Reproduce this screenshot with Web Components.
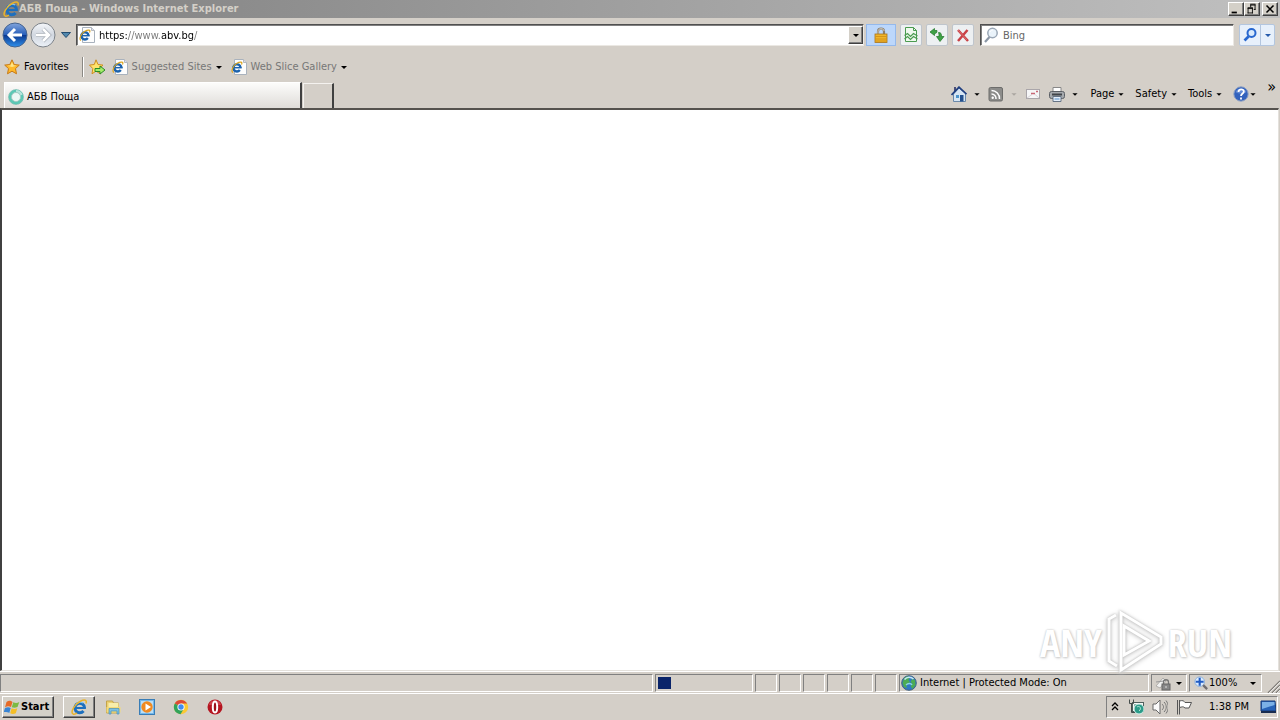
<!DOCTYPE html>
<html lang="en">
<head>
<meta charset="utf-8">
<title>АБВ Поща - Windows Internet Explorer</title>
<style>
html,body{margin:0;height:100%;overflow:hidden}
body{background:#d4cfc8;color:#000;font:11px/14px "DejaVu Sans Condensed","Noto Sans",sans-serif}
</style>
</head>
<body>
<ie-desktop></ie-desktop>
<script>
const icons = {
  ie: `<path d="M13.500 8.800A4.800 4.800 0 1 0 12.500 12" fill="none" stroke="#1d6fbe" stroke-width="3"/><path d="M4.500 9h10.400" stroke="#1d6fbe" stroke-width="2"/><path d="M4.500 6.500c1-3 5-4.500 7.500-2.500" stroke="#7cc4f2" stroke-width="1.200" fill="none"/><path d="M2 15C-1 13 4 5 9 2.500S16 1 15 4.500M2 15c1.500.5 3-.2 4-1" fill="none" stroke="#eab32b" stroke-width="1.500"/>`,
  page: `<path d="M3.500.500h9l3 3v12h-12z" fill="#fdfdfd" stroke="#a9b2bd"/><path d="M12.500.500v3h3" fill="#dde" stroke="#b4b8bd"/><path d="M9.500 8.500A3.600 3.600 0 1 0 8.800 11" fill="none" stroke="#1b62ad" stroke-width="2.400"/><path d="M3 8.700h7.700" stroke="#1b62ad" stroke-width="1.500"/><path d="M2 13.500C-.5 12.500 2 6.500 5.500 4.500s6.500-2 5 1" fill="none" stroke="#dda51d" stroke-width="1.200"/>`,
  star: `<path d="M8 .8l2.200 4.700 5.100.6-3.800 3.500 1 5.200L8 12.200l-4.500 2.600 1-5.200L.7 6.100l5.100-.6z" fill="#ffb92a" stroke="#c77a17"/><path d="M8 3l1.400 3.300 3.200.5L8 8 3.500 6.800l3-.4z" fill="#ffe68a"/>`,
  staradd: `<path d="M7 .8l2 4.700 5 .6-3.700 3.500 1 5.200L7 12.200l-4 2.600.8-5.200L.5 6.100l4.800-.6z" fill="#ffe36b" stroke="#cd8e22"/><path d="M6 9.500h5V7l5 4-5 4v-2.500H6z" fill="#a4ec6a" stroke="#2a8a26"/>`,
  spin: `<circle cx="8" cy="8" r="6" fill="#edf8f5" stroke="#5cc8b5" stroke-width="2.500"/><path d="M8 2a6 6 0 0 1 5.500 4" stroke="#b5e5dc" stroke-width="2.500" fill="none"/><circle cx="8" cy="8" r="7.500" fill="none" stroke="#45a898" stroke-width=".5"/><circle cx="8" cy="8" r="4.500" fill="none" stroke="#8fb5af" stroke-width=".6"/>`,
  lock: `<path d="M5 8V4.500C5 .5 11 .5 11 4.500V8" fill="none" stroke="#8b8070" stroke-width="2.200"/><path d="M5 7V4.500C5 .8 11 .8 11 4" fill="none" stroke="#e4e0d4" stroke-width=".8"/><rect x="2" y="7" width="12" height="8.500" fill="#f0b52a" stroke="#a8731a" stroke-width=".8"/><path d="M2.500 9.500h11M2.500 12h11M2.500 14h11" stroke="#cc8b18" stroke-width=".8"/>`,
  compat: `<path d="M2.500.500h8l3 3v11h-11z" fill="#eff9ee" stroke="#4a9b50"/><path d="M10.500.500v3h3" fill="none" stroke="#4a9b50"/><path d="M1.500 8.500l3-2 3 3 3-3 4 2.500M1.500 12l3-2.500 3 3 3-3 4 2.500" fill="none" stroke="#4a9b50" stroke-width="1.200"/>`,
  refresh: `<path d="M5.500 1.500l-4.500 3.500 4.500 3.500V6.500c2 0 2.500-1 2.500-3H5.500z" fill="#3fa246" stroke="#207527" stroke-width=".7"/><path d="M11 14.500l4-5h-2.500c0-3-.5-4-3-4 .5 1 .5 2.500.5 4H7.500z" fill="#3fa246" stroke="#207527" stroke-width=".7"/>`,
  stop: `<path d="M3 3l10 11M12.500 3L3 14" stroke="#c94045" stroke-width="2.500"/><path d="M3 3l9 10" stroke="#e07878" stroke-width=".8"/>`,
  search: `<circle cx="9.500" cy="6" r="4.700" fill="#eaf3fa" stroke="#9aa7b6" stroke-width="1.500"/><path d="M6.500 10L2 15" stroke="#8b97a6" stroke-width="2.200"/><path d="M7 5c.5-1.500 2-2 3-2" stroke="#fff" fill="none"/>`,
  find: `<circle cx="9.500" cy="6" r="4" fill="#d8eafd" stroke="#2767cf" stroke-width="2"/><path d="M6.500 9.500l-4 4" stroke="#2767cf" stroke-width="2.700"/>`,
  home: `<path d="M3 1h2v5H3z" fill="#4a4f78"/><path d="M2.500 8v7.500h12V7L8 2z" fill="#d7e6f4" stroke="#6a89aa"/><path d="M.5 9L8 1.200l7.500 7" fill="none" stroke="#203f80" stroke-width="1.800"/><rect x="9" y="9" width="3.500" height="6.500" fill="#23508e"/><rect x="5" y="9" width="3" height="3" fill="#4e95cb"/>`,
  rss: `<rect x="1" y="1.500" width="13.500" height="13.500" rx="1.500" fill="#8c8c8a" stroke="#6d6d6b"/><circle cx="4.700" cy="11.800" r="1.200" fill="#fff"/><path d="M3.500 8a4.500 4.500 0 0 1 4.500 5M3.500 4.500a8 8 0 0 1 8 8.500" stroke="#fff" stroke-width="1.500" fill="none"/>`,
  mail: `<rect x="1.500" y="3.500" width="13" height="9" fill="#f6f6f7" stroke="#aaa6aa"/><path d="M2 12l5-3.500M14 12L9.500 8" stroke="#d8d4d8"/><path d="M6 7.500h4M11 5.500h2" stroke="#c86776" stroke-width="1.500"/>`,
  print: `<path d="M4 6V1.500h8V6" fill="#fff" stroke="#888"/><rect x=".5" y="5.500" width="15" height="7" rx="2" fill="#a5a9ad" stroke="#5b5f65"/><path d="M3 8.500h10" stroke="#41454a" stroke-width="2"/><path d="M4 10.500h8v5H4z" fill="#e5effa" stroke="#667486"/><path d="M5.500 13h5" stroke="#568fc9"/>`,
  help: `<circle cx="8" cy="8" r="7.200" fill="#3262bd" stroke="#8fa1c3"/><path d="M2.500 6c1-4.500 10-4.500 11 0-3 2-8 2-11 0z" fill="#7fa4e5" opacity=".6"/><path d="M5.500 6c0-3.500 5.500-3.500 5.300-.3C10.700 7.500 8 7.500 8 10M8 11.500v2" fill="none" stroke="#fff" stroke-width="1.800"/>`,
  globe: `<circle cx="8" cy="8" r="7.300" fill="#2f78c4" stroke="#456380"/><path d="M3 3.500C5 1 8 1 9 2.500L7.500 5 9 7 5 9.500 6 13 3 12 1.500 8zM11 4l3 1 .5 5-3 4-2-3 2-2-2-2z" fill="#4dac53"/><path d="M3.500 4.500C6 1.500 10 1.500 12.500 4" stroke="#c5e7f6" stroke-width="1.500" fill="none"/><path d="M5 10c2-2 5-2 6 0" stroke="#8bd3e0" stroke-width="1.500" fill="none"/>`,
  privacy: `<path d="M1 11l7-8 3 3-6 7z" fill="#f1f1f0" stroke="#b0aeab"/><path d="M1 7l8-1" stroke="#999"/><path d="M8.500 9V7c0-3 5-3 5 0v2" stroke="#777" stroke-width="1.300" fill="none"/><rect x="7" y="9" width="8" height="6" fill="#888" stroke="#666"/><path d="M11 11v2" stroke="#ddd"/>`,
  zoom: `<circle cx="6.500" cy="6.500" r="5.500" fill="#dcecff" stroke="#85abd8"/><path d="M6.500 2v9M2 6.500h9" stroke="#205bc3" stroke-width="2.400"/><path d="M10.500 10.500l4.500 4.500" stroke="#706d70" stroke-width="2.700"/>`,
  flag4: `<path d="M2.500 3C5 1 7 2 8.500 3L7 8C5 7 3 7 1 8.500z" fill="#e66a27"/><path d="M9.300 3.300c2 1 4 1 6-.3L13.500 8c-2 1-4 1-5.700.3z" fill="#7cba42"/><path d="M.9 9.300C3 8 5 8 6.700 9L5.300 14C4 13-2 12.500-.5 14z" fill="#3884d4"/><path d="M7.600 9.300c2 1 4 .8 5.700 0l-1.500 5c-2 1-4 1-5.600 0z" fill="#f4be27"/>`,
  folder: `<path d="M1.500 2h6l1 2h5v10h-12z" fill="#ecd071" stroke="#c3a34b"/><path d="M3.500 4h10v9h-10z" fill="#f8edaa"/><path d="M1.500 8h14v5.500h-14z" fill="#f3da7b"/><path d="M4 15V9.500h10V15h-2v-3H6v3z" fill="#7cc0e3" stroke="#498fb9" stroke-width=".7"/>`,
  wmp: `<rect x=".5" y=".5" width="15" height="15" fill="#72b8ec" stroke="#397db6"/><path d="M2 2h12v12H2z" fill="#bbdef5"/><circle cx="8" cy="8" r="5.700" fill="#f08a20"/><path d="M6.500 4.500v7L12 8z" fill="#fff"/>`,
  chrome: `<circle cx="8" cy="8" r="7.200" fill="#fbc934"/><path d="M8 8L1.800 4.400A7.200 7.200 0 0 1 14.200 4.500H8z" fill="#dd4937"/><path d="M8 8L1.800 4.400A7.200 7.200 0 0 0 7.500 15.200L11 9.500z" fill="#32a35a"/><circle cx="8" cy="8" r="3.600" fill="#fff"/><circle cx="8" cy="8" r="2.700" fill="#428cf0"/>`,
  opera: `<circle cx="8" cy="8" r="7.500" fill="#b51520"/><path d="M2 6C3-.5 13-.5 14 6z" fill="#dc5962" opacity=".65"/><ellipse cx="8" cy="8" rx="2.200" ry="5.500" fill="#9d1019" stroke="#fff" stroke-width="2"/>`,
  network: `<rect x="4.500" y="3.500" width="11" height="9" fill="#f6f7f5" stroke="#50605d"/><rect x="6" y="5" width="8" height="6" fill="#8eb8af"/><path d="M1.500.500v4h4v-4M3.500 4.500v9h4" fill="none" stroke="#454d4b"/><circle cx="11" cy="10" r="5" fill="#2c9b88" stroke="#d9f2ec"/><path d="M9 8c3-2 5 2 2 4" stroke="#b4e4d7" fill="none"/>`,
  speaker: `<path d="M1 5h3l4-4v14l-4-4H1z" fill="#fafafa" stroke="#686868"/><path d="M10 5c2 2 2 4 0 6M12 3c3 3 3 7 0 10M14 1.500c3 4 3 9 0 13" stroke="#777" fill="none"/>`,
  action: `<path d="M1.500 1v14.500M3.500 1v14.500" stroke="#555"/><path d="M3.500 2C7 1 8 2 9 3.500h6.500L13 9H9C7 7 6 8 3.500 8.500z" fill="#fff" stroke="#555"/>`,
  desktop: `<path d="M1 2h14l1 10H1z" fill="#2763b7" stroke="#173b77"/><path d="M2 3h12.500v3L2 10z" fill="#7bb1e6"/><path d="M1 13h15" stroke="#182c50" stroke-width="2"/>`,
  drop: `<path d="M5 7h6l-3 3z"/>`,
  min: `<path d="M3 11h6v2H3z"/>`,
  restore: `<path d="M6 3.500h6M6.500 3v3M11.500 3v6M12 8.500h-2M3 7.500h6M3.500 7v6M8.500 7v6M3 12.500h6" stroke="#000" fill="none"/><path d="M6 2.500h6M3 6.500h6" stroke="#000"/>`,
  close: `<path d="M4 4l8 8M12 4l-8 8" stroke="#000" stroke-width="1.800"/>`,
  grip: `<path d="M16 4L4 16M16 8l-8 8M16 12l-4 4" stroke="#807d78" stroke-width="1.500"/><path d="M16 5L5 16M16 9l-7 7M16 13l-3 3" stroke="#fff" stroke-width=".7"/>`
};

class UiIcon extends HTMLElement {
  connectedCallback() {
    if (this.shadowRoot) return;
    this.attachShadow({mode: "open"}).innerHTML = `<style>:host{display:block;flex:none;width:16px;height:16px}svg{display:block;width:100%;height:100%}</style><svg viewBox="0 0 16 16" aria-hidden="true">${icons[this.getAttribute("name")]}</svg>`;
  }
}
customElements.define("ui-icon", UiIcon);

const base = `*,:host{box-sizing:border-box}button{font:inherit;color:inherit;background:none;border:0;padding:0;margin:0;display:flex;align-items:center;white-space:nowrap;flex:none}`;

function define(tag, css, html) {
  customElements.define(tag, class extends HTMLElement {
    constructor() {
      super();
      this.attachShadow({mode: "open"}).innerHTML = `<style>${base}${css}</style>${html}`;
    }
  });
}

define("title-bar", `
:host{display:flex;align-items:center;height:18px;padding:0 2px 0 3px;background:linear-gradient(90deg,#808080,#c0c0c0);color:#d4d0c8;font-weight:bold}
h1{font:inherit;margin:0;flex:1}
button{width:16px;height:14px;justify-content:center;background:#d4d0c8;border:1px solid;border-color:#fff #404040 #404040 #fff;box-shadow:inset -1px -1px #808080}
button ui-icon{width:14px;height:14px}.close{margin-left:2px}`,
`<ui-icon name="ie"></ui-icon><h1>АБВ Поща - Windows Internet Explorer</h1>
<button aria-label="Minimize"><ui-icon name="min"></ui-icon></button><button aria-label="Restore"><ui-icon name="restore"></ui-icon></button><button class="close" aria-label="Close"><ui-icon name="close"></ui-icon></button>`);

define("nav-bar", `
:host{display:flex;align-items:center;height:34px;padding:0 5px 0 2px}
.travel{display:flex;gap:2px;margin-right:5px}
.travel button{width:26px;height:26px}
.travel svg{width:26px;height:26px;display:block}
.recent svg{width:10px;height:6px}
.recent{margin-right:5px}
.field{display:flex;align-items:center;height:22px;background:#fff;border:1px solid;border-color:#505050 #ebe8e3 #ebe8e3 #505050;box-shadow:inset 1px 1px #808080;padding-left:2px;gap:4px}
.address{flex:1}
.search{flex:0 1 254px;margin:0 5px 0 6px}
input{flex:1;min-width:0;border:0;outline:0;padding:1px 0 0;background:none;font:inherit;height:18px}
#url{color:transparent;background:linear-gradient(90deg,#000 29px,#777 29px 62px,#000 62px 94px,#777 94px);background-clip:text;-webkit-background-clip:text}
#query::placeholder{color:#666;opacity:1}
.drop{width:15px;height:18px;justify-content:center;background:#d4d0c8;border:1px solid;border-color:#fff #404040 #404040 #fff;box-shadow:inset -1px -1px #808080}
.secure{width:30px;height:22px;margin:0 4px 0 2px;justify-content:center;background:#bcd7fb;border:1px solid #94b9ec}
.tool{width:22px;height:22px;justify-content:center;background:#edf0f2;border:1px solid #bfc5cc;border-radius:2px;margin-right:4px}
.tool.last{margin-right:0}
.go{height:22px;background:#e7f0fb;border:1px solid #b3c6df;border-radius:2px}
.go button{height:20px;width:20px;justify-content:center}.go{display:flex}.go button+button{width:14px;border-left:1px solid #b3c6df}
.go [name=drop]{fill:#265bac}`,
`<div class="travel"><button aria-label="Back"><svg viewBox="0 0 26 26"><defs><linearGradient id="b" x2="0" y2="1"><stop stop-color="#83a5dc"/><stop offset=".5" stop-color="#255db9"/><stop offset=".52" stop-color="#0c3a91"/><stop offset="1" stop-color="#2f91ed"/></linearGradient></defs><circle cx="13" cy="13" r="12" fill="url(#b)" stroke="#45638f"/><path d="M13 7l-6 6 6 6M8 13h12" fill="none" stroke="#fff" stroke-width="3"/></svg></button><button aria-label="Forward"><svg viewBox="0 0 26 26"><defs><linearGradient id="f" x2="0" y2="1"><stop stop-color="#f5f7fa"/><stop offset=".5" stop-color="#d1d7e0"/><stop offset="1" stop-color="#edf2f8"/></linearGradient></defs><circle cx="13" cy="13" r="12" fill="url(#f)" stroke="#7c8289"/><path d="M13 7l6 6-6 6M18 13H6" fill="none" stroke="#aab0b9" stroke-width="4"/><path d="M13 7l6 6-6 6M18 13H6" fill="none" stroke="#fff" stroke-width="2.500"/></svg></button></div>
<button class="recent" aria-label="Recent pages"><svg viewBox="0 0 10 6"><path d="M.5.500h9L5 5.500z" fill="#5188ae" stroke="#244d70"/></svg></button>
<div class="field address"><ui-icon name="page"></ui-icon><input id="url" aria-label="Address" value="https://www.abv.bg/" spellcheck="false"><button class="drop" aria-label="Address list"><ui-icon name="drop"></ui-icon></button></div>
<button class="secure" aria-label="Security report"><ui-icon name="lock"></ui-icon></button>
<button class="tool" aria-label="Compatibility view"><ui-icon name="compat"></ui-icon></button><button class="tool" aria-label="Refresh"><ui-icon name="refresh"></ui-icon></button><button class="tool last" aria-label="Stop"><ui-icon name="stop"></ui-icon></button>
<div class="field search"><ui-icon name="search"></ui-icon><input id="query" aria-label="Search" placeholder="Bing"></div>
<div class="go"><button aria-label="Search"><ui-icon name="find"></ui-icon></button><button aria-label="Search options"><ui-icon name="drop"></ui-icon></button></div>`);

define("favorites-bar", `
:host{display:flex;align-items:center;height:28px;padding:2px 4px 0}
button{gap:4px}.site{color:#777}.site ui-icon[name=drop]{fill:#000;margin-left:-5px}
.rule{width:2px;height:20px;border-left:1px solid #8a8883;border-right:1px solid #fff;margin:0 5px 0 13px}
.add{margin-right:7px}.gap{margin-right:4px}`,
`<button><ui-icon name="star"></ui-icon><span>Favorites</span></button><span class="rule"></span><button class="add" aria-label="Add to Favorites Bar"><ui-icon name="staradd"></ui-icon></button>
<button class="site gap"><ui-icon name="page"></ui-icon><span>Suggested Sites</span><ui-icon name="drop"></ui-icon></button>
<button class="site"><ui-icon name="page"></ui-icon><span>Web Slice Gallery</span><ui-icon name="drop"></ui-icon></button>`);

define("tab-bar", `
:host{display:flex;align-items:flex-end;height:28px;padding:0 4px}
.tab{flex:0 1 298px;height:26px;padding:2px 3px 0;gap:3px;background:linear-gradient(#fcfcfb,#dfdcd8);border:1px solid #fff;border-bottom:0;border-right:2px solid #404040}
.new{width:31px;height:25px;margin-left:1px;border:1px solid #f4f2ef;border-bottom:0;border-right:2px solid #404040}
nav{display:flex;align-items:center;margin-left:auto;height:28px}
.i ui-icon[name=drop]{width:14px;margin-left:3px}.i{margin-right:4px}
.i.wide{margin-right:8px}
.menu{margin-right:7px}.menu [name=drop]{width:14px}.menu [name=help]+ui-icon{margin-left:-3px}
.dim{fill:#aaa6a1}.more{font-size:16px;align-self:flex-start;height:14px}`,
`<button class="tab"><ui-icon name="spin"></ui-icon><span>АБВ Поща</span></button><button class="new" aria-label="New tab"></button>
<nav aria-label="Command bar"><button class="i" aria-label="Home"><ui-icon name="home"></ui-icon><ui-icon name="drop"></ui-icon></button><button class="i" aria-label="Feeds"><ui-icon name="rss"></ui-icon><ui-icon class="dim" name="drop"></ui-icon></button><button class="i wide" aria-label="Read mail"><ui-icon name="mail"></ui-icon></button><button class="i wide" aria-label="Print"><ui-icon name="print"></ui-icon><ui-icon name="drop"></ui-icon></button>
<button class="menu">Page<ui-icon name="drop"></ui-icon></button><button class="menu">Safety<ui-icon name="drop"></ui-icon></button><button class="menu">Tools<ui-icon name="drop"></ui-icon></button><button class="menu" aria-label="Help"><ui-icon name="help"></ui-icon><ui-icon name="drop"></ui-icon></button><button class="more" aria-label="More commands">»</button></nav>`);

define("brand-mark", `
:host{display:flex;align-items:center;gap:3px;color:#fff;font:300 38px/60px "Open Sans Condensed","Roboto Condensed","Noto Sans Condensed","Roboto",sans-serif;text-shadow:0 0 2px #bbb,1px 1px 3px #ccc}
svg{width:60px;height:64px;filter:drop-shadow(0 0 1px #bbb) drop-shadow(0 1px 2px #ccc)}`,
`<span>ANY</span><svg viewBox="0 0 60 64" fill="none" stroke="#fff" stroke-width="3" aria-hidden="true"><path d="M12 56l-8-5V9l7-4M16 3l40 24v7L16 60z"/><path d="M19 16v29l25-14z"/></svg><span>RUN</span>`);

define("page-view", `
:host{display:block;flex:1;min-height:0;position:relative;background:#fff;border:2px solid;border-color:#404040 #e4e1dc #e4e1dc #404040;border-top-color:#55524e;border-right-width:1px;border-bottom-width:1px;margin-right:1px}
brand-mark{position:absolute;right:46px;bottom:-4px}`,
`<brand-mark></brand-mark>`);

define("status-bar", `
:host{display:flex;align-items:center;height:23px;gap:2px;padding-top:1px;border-top:1px solid #fff;border-bottom:1px solid #fff}
.p{height:18px;border:1px solid;border-color:#808080 #fff #fff #808080;display:flex;align-items:center;flex:none;white-space:nowrap}
.msg{flex:1}.prog{width:98px;padding-left:2px}.prog i{width:13px;height:12px;background:#0a246a}
.s{width:22px}.zone{width:250px;padding-left:1px;gap:3px}.priv{width:36px;padding-left:3px}
.zoom{width:73px;padding-left:4px;justify-content:space-between}.zoom button:first-child{gap:1px}.zoom [name=zoom]{width:14px;height:14px}.grip{align-self:flex-end}`,
`<div class="p msg"></div><div class="p prog"><i></i></div><div class="p s"></div><div class="p s"></div><div class="p s"></div><div class="p s"></div><div class="p s"></div><div class="p s"></div>
<div class="p zone"><ui-icon name="globe"></ui-icon><span>Internet | Protected Mode: On</span></div><div class="p priv"><button aria-label="Privacy"><ui-icon name="privacy"></ui-icon><ui-icon name="drop"></ui-icon></button></div>
<div class="p zoom"><button><ui-icon name="zoom"></ui-icon><span>100%</span></button><button aria-label="Zoom level"><ui-icon name="drop"></ui-icon></button></div><ui-icon class="grip" name="grip"></ui-icon>`);

define("task-bar", `
:host{display:flex;align-items:center;height:26px;padding:0 2px}
.start,.active{height:22px;background:#d4d0c8;border:1px solid;border-color:#fff #404040 #404040 #fff;box-shadow:inset -1px -1px #808080}
.start{width:52px;padding-left:1px;gap:1px;font-weight:bold;margin-right:9px}.active{width:32px;justify-content:center;margin-right:10px}
.app{margin-right:18px}
.tray{display:flex;align-items:center;margin-left:auto;height:22px;width:172px;padding:0 1px 0 3px;border:1px solid;border-color:#808080 #fff #fff #808080;justify-content:space-between}
.tray svg{width:10px;height:12px}time{padding:0 3px 0 9px}`,
`<button class="start"><ui-icon name="flag4"></ui-icon><span>Start</span></button><button class="active" aria-label="Internet Explorer"><ui-icon name="ie"></ui-icon></button><button class="app" aria-label="Explorer"><ui-icon name="folder"></ui-icon></button><button class="app" aria-label="Media Player"><ui-icon name="wmp"></ui-icon></button><button class="app" aria-label="Chrome"><ui-icon name="chrome"></ui-icon></button><button class="app" aria-label="Opera"><ui-icon name="opera"></ui-icon></button>
<div class="tray"><button aria-label="Show hidden icons"><svg viewBox="0 0 10 12"><path d="M2 5l3-3 3 3M2 9l3-3 3 3" fill="none" stroke="#000" stroke-width="1.300"/></svg></button><ui-icon name="network"></ui-icon><ui-icon name="speaker"></ui-icon><ui-icon name="action"></ui-icon><time datetime="13:38">1:38 PM</time><ui-icon name="desktop"></ui-icon></div>`);

define("ie-desktop", `:host{display:flex;flex-direction:column;height:100vh}`,
`<title-bar></title-bar><nav-bar></nav-bar><favorites-bar></favorites-bar><tab-bar></tab-bar><page-view></page-view><status-bar></status-bar><task-bar></task-bar>`);
</script>
</body>
</html>
